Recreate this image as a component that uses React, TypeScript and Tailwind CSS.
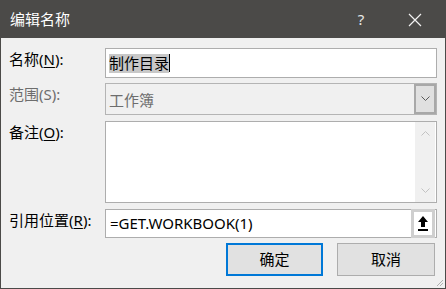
import React from "react";

const font = { fontFamily: '"Noto Sans", "Noto Sans CJK SC", sans-serif' };

function Label({ text, keyChar, muted }: { text: string; keyChar: string; muted?: boolean }) {
  return (
    <div
      className={`w-[96px] shrink-0 pt-[1px] text-[15px] leading-[20px] ${muted ? "text-[#6d6d6d]" : "text-black"}`}
    >
      {text}(
      {muted ? keyChar : <span className="underline underline-offset-2">{keyChar}</span>}):
    </div>
  );
}

export default function App() {
  return (
    <div
      className="relative w-[446px] h-[289px] border border-[#4b4a48] bg-[#f0f0f0] flex flex-col overflow-hidden"
      style={font}
    >
      {/* title bar */}
      <div className="h-[37px] shrink-0 bg-[#4b4a48] flex items-center text-white">
        <div className="pl-[9px] text-[15px] leading-none flex-1">编辑名称</div>
        <div className="w-[24px] text-center text-[15px] mr-[35px] text-[#e8e8e8]">?</div>
        <svg width="14" height="14" viewBox="0 0 14 14" className="mr-[23px]">
          <path d="M1 1 L13 13 M13 1 L1 13" stroke="#f2f2f2" strokeWidth="1.2" fill="none" />
        </svg>
      </div>

      {/* form */}
      <div className="flex flex-col pl-[8px]">
        <div className="flex mt-[10px]">
          <Label text="名称" keyChar="N" />
          <div className="w-[332px] h-[30px] border border-[#adadad] bg-white flex items-center pl-[3px]">
            <span className="bg-[#c8c8c8] text-[15px] leading-[19px] text-black">制作目录</span>
            <span className="w-[1px] h-[18px] bg-black" />
          </div>
        </div>

        <div className="flex mt-[5px]">
          <Label text="范围" keyChar="S" muted />
          <div className="w-[332px] h-[32px] border border-[#b4b4b4] bg-[#f0f0f0] flex items-center">
            <span className="flex-1 pl-[3px] pt-[2px] text-[15px] text-[#6d6d6d]">工作簿</span>
            <div className="w-[22px] h-[30px] border-2 border-[#a8a8a8] bg-[#e0e0e0] flex items-center justify-center">
              <svg width="9" height="6" viewBox="0 0 9 6">
                <path d="M0.5 0.5 L4.5 4.5 L8.5 0.5" stroke="#5a5a5a" strokeWidth="1" fill="none" />
              </svg>
            </div>
          </div>
        </div>

        <div className="flex mt-[6px]">
          <Label text="备注" keyChar="O" />
          <div className="w-[332px] h-[82px] border border-[#adadad] bg-white flex">
            <div className="flex-1" />
            <div className="w-[20px] bg-[#f0f0f0] flex flex-col items-center justify-between py-[8px] mr-[1px]">
              <svg width="9" height="6" viewBox="0 0 9 6">
                <path d="M0.5 5.5 L4.5 1.5 L8.5 5.5" stroke="#c2c2c2" strokeWidth="1" fill="none" />
              </svg>
              <svg width="9" height="6" viewBox="0 0 9 6">
                <path d="M0.5 0.5 L4.5 4.5 L8.5 0.5" stroke="#c2c2c2" strokeWidth="1" fill="none" />
              </svg>
            </div>
          </div>
        </div>

        <div className="flex mt-[6px]">
          <Label text="引用位置" keyChar="R" />
          <div className="w-[332px] h-[29px] border border-[#adadad] bg-white flex items-center">
            <span className="flex-1 pl-[4px] text-[15px] text-black">=GET.WORKBOOK(1)</span>
            <div className="w-[24px] h-[29px] border-[3px] border-[#cfcfcf] bg-white flex items-center justify-center mr-[1px]">
              <svg width="12" height="17" viewBox="0 0 12 17">
                <path d="M6 1 L11 7 L8 7 L8 12 L4 12 L4 7 L1 7 Z" fill="#000" />
                <rect x="1" y="14" width="10" height="2" fill="#000" />
              </svg>
            </div>
          </div>
        </div>

        <div className="flex justify-end gap-[14px] mt-[5px] mr-[10px]">
          <button className="w-[97px] h-[33px] border-2 border-[#0078d7] bg-[#e1e1e1] text-[15px] text-black">
            确定
          </button>
          <button className="w-[98px] h-[33px] border border-[#adadad] bg-[#e1e1e1] text-[15px] text-black">
            取消
          </button>
        </div>
      </div>

      {/* resize grip */}
      <svg width="10" height="10" viewBox="0 0 10 10" className="absolute right-[1px] bottom-[1px]">
        <path d="M9 3 L3 9 M9 6 L6 9" stroke="#b0b0b0" strokeWidth="1" />
      </svg>
    </div>
  );
}
